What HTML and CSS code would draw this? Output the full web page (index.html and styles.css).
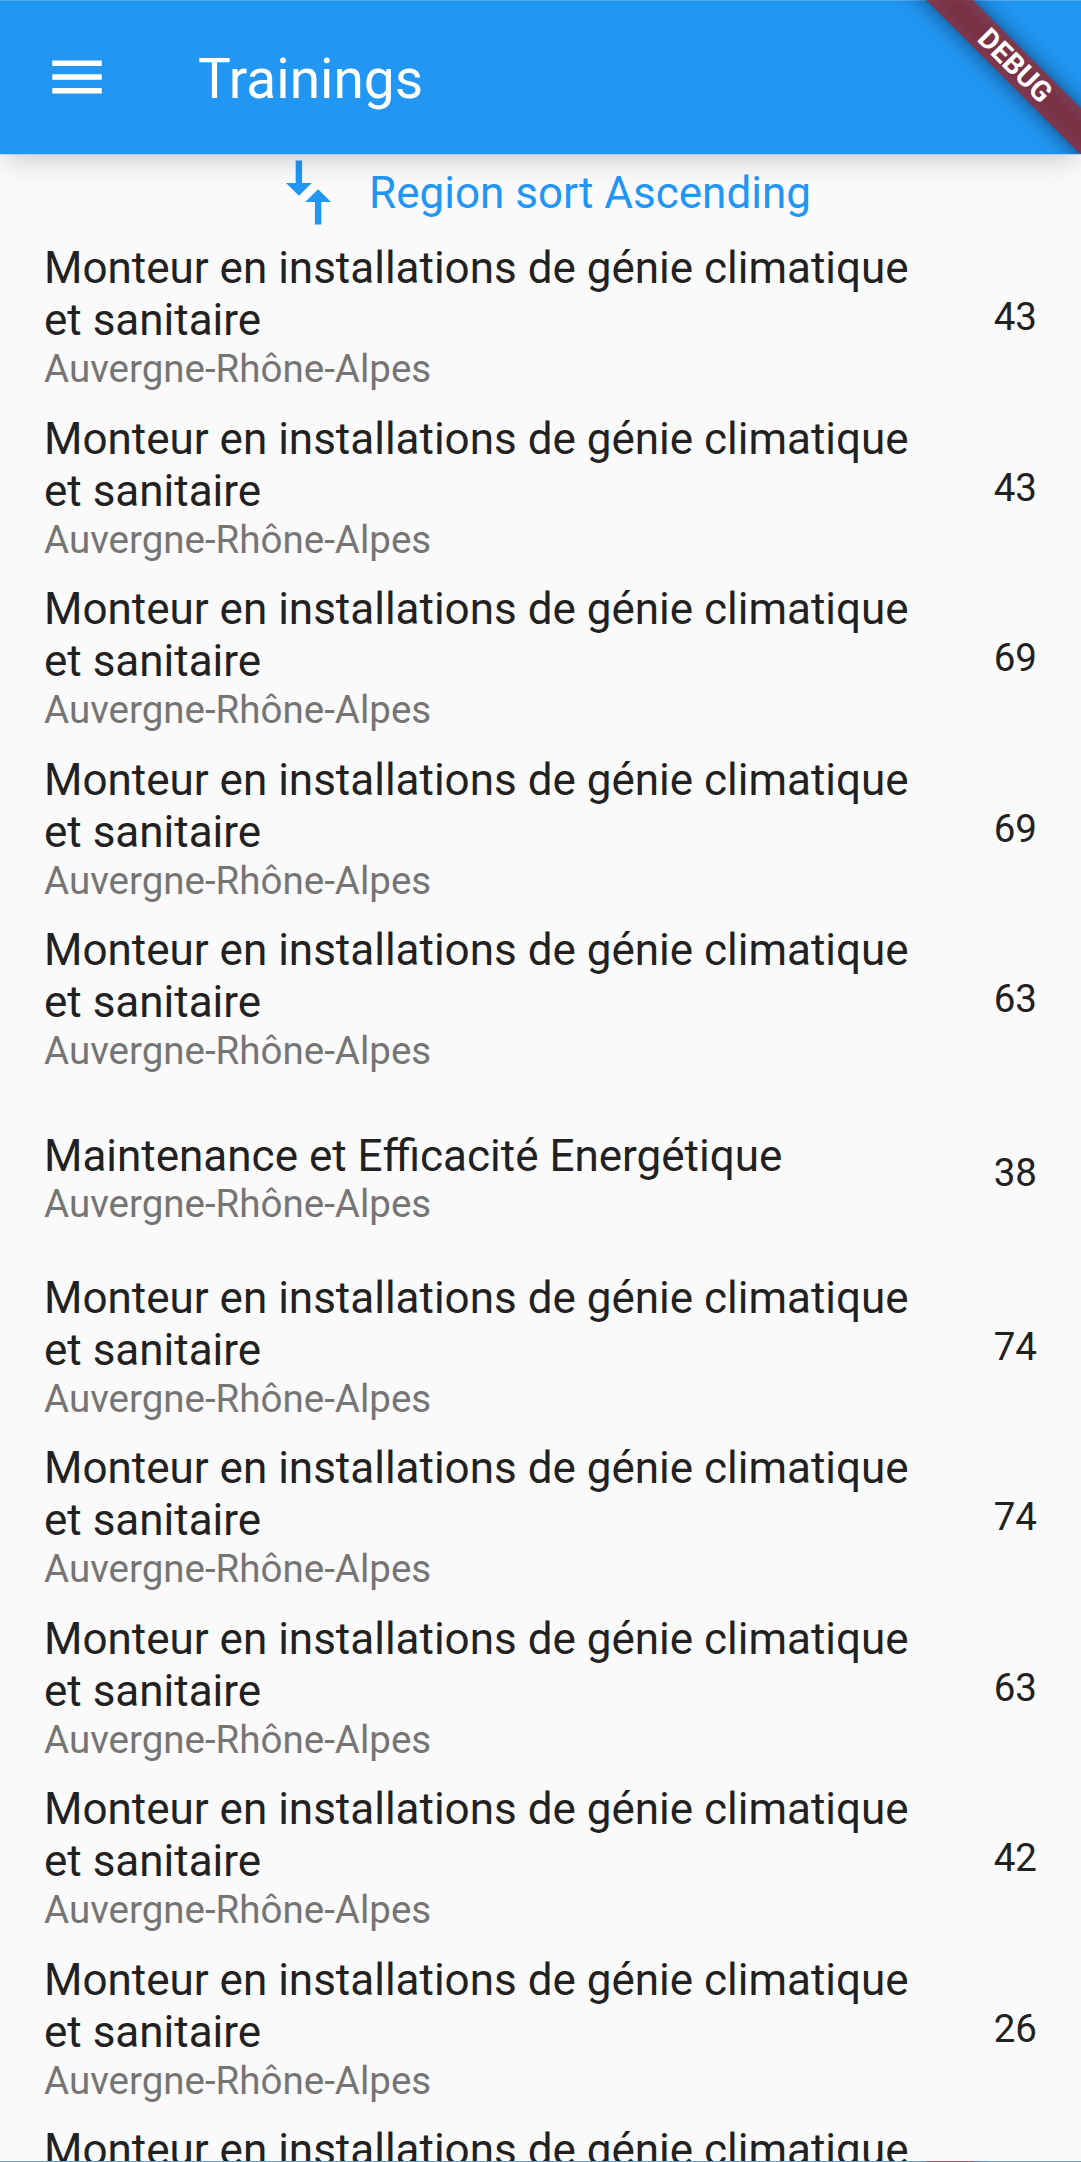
FILE: index.html
```html
<!DOCTYPE html>
<html lang="fr">
<head>
<meta charset="utf-8">
<title>Trainings</title>
<link rel="stylesheet" href="styles.css">
</head>
<body>
<div class="app">
  <header class="app-bar">
    <svg class="menu-icon" viewBox="0 0 24 24"><path d="M3 18h18v-2H3v2zm0-5h18v-2H3v2zm0-7v2h18V6H3z"/></svg>
    <h1 class="app-title">Trainings</h1>
    <div class="ribbon-corner"><div class="ribbon">DEBUG</div></div>
  </header>
  <div class="sort">
    <svg class="sort-icon" viewBox="0 0 24 24"><path transform="rotate(90 12 12)" d="M9.01 14H2v2h7.01v3L13 15l-3.99-4v3zm5.98-1v-3H22V8h-7.01V5L11 9l3.99 4z"/></svg>
    <span class="sort-label">Region sort Ascending</span>
  </div>
  <main class="list">
    <div class="row"><div class="text"><div class="name">Monteur en installations de génie climatique et sanitaire</div><div class="region">Auvergne-Rhône-Alpes</div></div><div class="count">43</div></div>
    <div class="row"><div class="text"><div class="name">Monteur en installations de génie climatique et sanitaire</div><div class="region">Auvergne-Rhône-Alpes</div></div><div class="count">43</div></div>
    <div class="row"><div class="text"><div class="name">Monteur en installations de génie climatique et sanitaire</div><div class="region">Auvergne-Rhône-Alpes</div></div><div class="count">69</div></div>
    <div class="row"><div class="text"><div class="name">Monteur en installations de génie climatique et sanitaire</div><div class="region">Auvergne-Rhône-Alpes</div></div><div class="count">69</div></div>
    <div class="row"><div class="text"><div class="name">Monteur en installations de génie climatique et sanitaire</div><div class="region">Auvergne-Rhône-Alpes</div></div><div class="count">63</div></div>
    <div class="row row-short"><div class="text"><div class="name">Maintenance et Efficacité Energétique</div><div class="region">Auvergne-Rhône-Alpes</div></div><div class="count">38</div></div>
    <div class="row"><div class="text"><div class="name">Monteur en installations de génie climatique et sanitaire</div><div class="region">Auvergne-Rhône-Alpes</div></div><div class="count">74</div></div>
    <div class="row"><div class="text"><div class="name">Monteur en installations de génie climatique et sanitaire</div><div class="region">Auvergne-Rhône-Alpes</div></div><div class="count">74</div></div>
    <div class="row"><div class="text"><div class="name">Monteur en installations de génie climatique et sanitaire</div><div class="region">Auvergne-Rhône-Alpes</div></div><div class="count">63</div></div>
    <div class="row"><div class="text"><div class="name">Monteur en installations de génie climatique et sanitaire</div><div class="region">Auvergne-Rhône-Alpes</div></div><div class="count">42</div></div>
    <div class="row"><div class="text"><div class="name">Monteur en installations de génie climatique et sanitaire</div><div class="region">Auvergne-Rhône-Alpes</div></div><div class="count">26</div></div>
    <div class="row"><div class="text"><div class="name">Monteur en installations de génie climatique</div></div></div>
  </main>
  <div class="bottom-line"></div>
</div>
</body>
</html>
```
FILE: styles.css
```css
* { box-sizing: border-box; }
body {
  margin: 0;
  background: #fafafa;
  color: #212121;
  font-family: Roboto, "Liberation Sans", sans-serif;
}
.app {
  display: flex;
  flex-direction: column;
  height: 2162px;
  overflow: hidden;
}
.app-bar {
  position: relative;
  z-index: 1;
  flex: none;
  display: flex;
  align-items: center;
  gap: 88px;
  height: 154px;
  padding-left: 44px;
  background: linear-gradient(#4ba9f5 1px, #2196f3 1px);
  color: #fff;
  box-shadow: 0 1px 0 rgba(33, 150, 243, .25), 0 10px 26px -4px rgba(0, 0, 0, .19);
}
.menu-icon { width: 66px; height: 66px; fill: currentColor; }
.app-title {
  margin: 0;
  padding-top: 4px;
  font-size: 55px;
  font-weight: 400;
  line-height: 64px;
}
.ribbon-corner {
  position: absolute;
  top: 0;
  right: 0;
  width: 220px;
  height: 154px;
  overflow: hidden;
}
.ribbon {
  position: absolute;
  left: 4px;
  top: 49px;
  width: 300px;
  height: 33px;
  transform: rotate(45deg);
  background:
    linear-gradient(rgba(183, 28, 28, .627), rgba(183, 28, 28, .627)),
    linear-gradient(rgba(0, 0, 0, .27), rgba(0, 0, 0, .43) 40%, rgba(0, 0, 0, .43) 60%, rgba(0, 0, 0, .27));
  box-shadow: 0 0 22px rgba(0, 0, 0, .5);
  font-size: 28.5px;
  font-weight: 700;
  line-height: 33px;
  text-align: center;
}
.sort {
  flex: none;
  display: flex;
  align-items: center;
  justify-content: center;
  gap: 22px;
  height: 77px;
  color: #2196f3;
}
.sort-icon { width: 77px; height: 77px; fill: currentColor; }
.sort-label { font-size: 44px; line-height: 52px; }
.list { flex: 1; min-height: 0; overflow: hidden; }
.row {
  display: flex;
  align-items: center;
  justify-content: space-between;
  height: 170.5px;
  padding: 0 44px;
}
.text { width: 880px; align-self: flex-start; padding-top: 11px; }
.name { font-size: 44px; line-height: 52.3px; }
.region { margin-top: -.5px; color: #757575; font-size: 38.5px; line-height: 45px; }
.count { padding-top: 1px; font-size: 38.5px; line-height: 45px; }
.row-short { height: 177px; }
.row-short .text { padding-top: 46px; }
.bottom-line {
  flex: none;
  height: 1px;
  background: linear-gradient(90deg, #5ba1dc 920px, #4a7fb0 927px, #9a5068 927px, #9a5068 973px, #4a7fb0 973px, #5ba1dc 990px);
}
```
